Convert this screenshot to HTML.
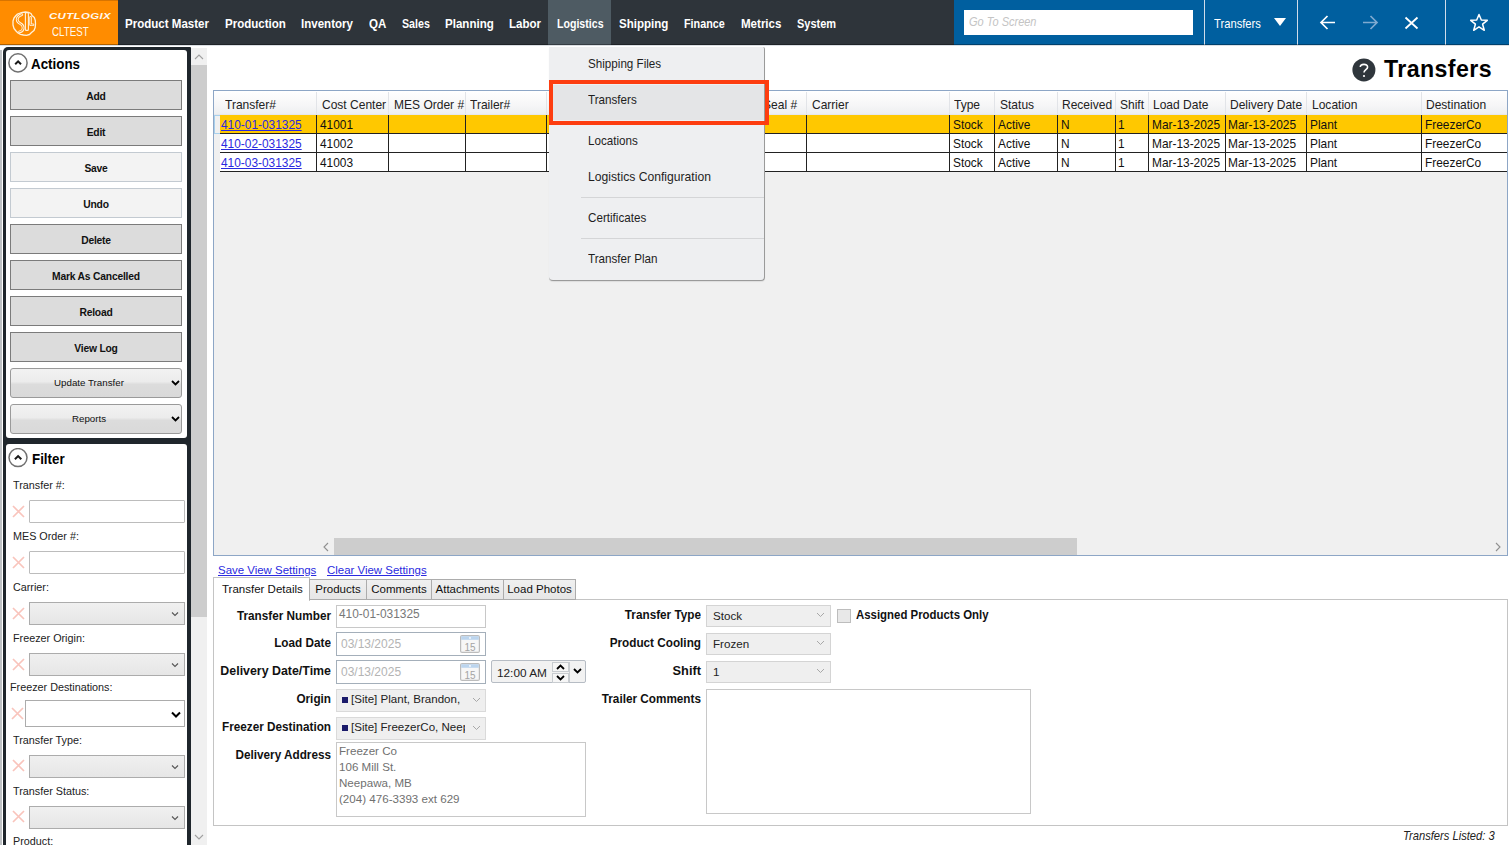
<!DOCTYPE html>
<html><head><meta charset="utf-8">
<style>
*{box-sizing:border-box;margin:0;padding:0}
html,body{width:1509px;height:845px;overflow:hidden;background:#fff;font-family:"Liberation Sans",sans-serif;color:#000}
.a{position:absolute}
.nw{white-space:nowrap}
/* top bar */
#logo{left:0;top:0;width:118px;height:45px;background:#ff8c00;border-top:1px solid #d87400}
#nav{left:118px;top:0;width:837px;height:45px;background:#2e343a}
.nv{top:16.5px;font-size:13.5px;font-weight:bold;color:#fff;line-height:14px;transform:scaleX(.855);transform-origin:0 0}
#blue{left:954px;top:0;width:555px;height:45px;background:#005f9f}
.sep{top:0;width:1px;height:45px;background:#d0dcea}
/* left panel */
.panel{border:3px solid #1f262c;border-radius:5px;background:#fff}
.btn{left:10px;width:172px;height:30px;background:#dcdcdc;border:1px solid #7b7b7b;font-size:10.3px;font-weight:bold;text-align:center;line-height:31px;color:#111;letter-spacing:-0.2px}
.btn.dis{background:#f3f3f3;border-color:#c3cad1}
.dd{left:10px;width:172px;height:30px;border:1px solid #9a9a9a;border-radius:3px;background:linear-gradient(#f2f2f2 0%,#ececec 45%,#dcdcdc 55%,#d9d9d9 100%);font-size:9.75px;text-align:center;line-height:28px;color:#111}
.flab{left:12.5px;font-size:11px;color:#222;line-height:12px;transform:scaleX(.98);transform-origin:0 0}
.fx{left:12px;width:13px;height:13px}
.fin{left:29px;width:156px;height:23px;border:1px solid #bcbcbc;border-radius:1px;background:#fff}
.fcb{left:29px;width:156px;height:23px;border:1px solid #acacac;background:linear-gradient(#f0f0f0,#e6e6e6)}
.gh{top:98px;font-size:12.4px;color:#222;line-height:14px;transform:scaleX(.97);transform-origin:0 0}
.gc{font-size:11.9px;color:#111;line-height:14px}
.lnk{color:#2a2ae0;text-decoration:underline}
.mi{left:588px;font-size:12.6px;color:#1e1e1e;line-height:14px;transform:scaleX(.925);transform-origin:0 0}
.lbl{font-size:12.8px;font-weight:bold;text-align:right;line-height:14px;color:#111;transform:scaleX(.918);transform-origin:100% 0}
.tb{top:579px;height:21px;border:1px solid #acacac;background:linear-gradient(#f0f0f0,#e6e6e6);font-size:11.5px;line-height:19px;text-align:center;color:#111}
.cmb{left:706px;width:125px;height:22px;border:1px solid #d4d4d4;background:#efefef;font-size:11.6px;line-height:20px;padding-left:6px;color:#222}
.inp{left:336px;width:150px;height:23px;border:1px solid #c8c8c8;background:#fff;font-size:11.6px;color:#7a7a7a}
</style></head><body>

<!-- ============ TOP BAR ============ -->
<div id="logo" class="a"></div>
<svg class="a" style="left:8px;top:8px" width="32" height="32" viewBox="8 8 32 32" fill="none" stroke-linecap="round" stroke-linejoin="round">
 <path d="M17.5 14 L20 13.2 L22.5 12.3 L25.5 12 L28.5 12.3 L31 13.5 L32 15.5 L34.3 17.5 L35.3 20.5 L35.5 24 L35.2 27.5 L34 30.5 L31.5 32.5 L29.5 34.5 L26.5 35.3 L23.5 35 L20.5 34.3 L18 33 L16 31 L14 28.5 L13 25 L13 21 L14 18 L16 15.5 Z" stroke="#fff2dc" stroke-width="1.3"/>
 <path d="M21.8 14.6 Q17.2 16 17.2 19.6 Q17.2 22.2 20.2 23.6 Q23.2 25 23.2 28 Q23.2 31.4 19.6 31.8" stroke="#fff2dc" stroke-width="2.8"/>
 <path d="M21.8 14.6 Q17.2 16 17.2 19.6 Q17.2 22.2 20.2 23.6 Q23.2 25 23.2 28 Q23.2 31.4 19.6 31.8" stroke="#ff8c00" stroke-width="0.9"/>
 <rect x="25.4" y="12.6" width="3" height="17.8" rx="1" stroke="#fff2dc" stroke-width="1.1"/>
 <path d="M30.6 17.4 V24.8 H33" stroke="#fff2dc" stroke-width="2.6"/>
 <path d="M30.6 17.4 V24.8 H33" stroke="#ff8c00" stroke-width="0.8"/>
</svg>
<div class="a nw" style="left:49px;top:10.5px;font-size:8.3px;line-height:10px;font-weight:bold;font-style:italic;color:#fff8ee;letter-spacing:0.3px;transform:scaleX(1.37);transform-origin:left top">CUTLOGIX</div>
<div class="a nw" style="left:52px;top:24.5px;font-size:12.5px;color:#fff8ee;transform:scaleX(0.78);transform-origin:left top">CLTEST</div>

<div id="nav" class="a"></div>
<div class="a" style="left:548px;top:0;width:63px;height:45px;background:#4e5b63"></div>
<div class="a nv nw" style="left:125px">Product Master</div>
<div class="a nv nw" style="left:225px">Production</div>
<div class="a nv nw" style="left:301px">Inventory</div>
<div class="a nv nw" style="left:369px">QA</div>
<div class="a nv nw" style="left:402px;transform:scaleX(.79)">Sales</div>
<div class="a nv nw" style="left:445px">Planning</div>
<div class="a nv nw" style="left:509px">Labor</div>
<div class="a nv nw" style="left:557px;transform:scaleX(.785)">Logistics</div>
<div class="a nv nw" style="left:619px">Shipping</div>
<div class="a nv nw" style="left:684px;transform:scaleX(.80)">Finance</div>
<div class="a nv nw" style="left:741px">Metrics</div>
<div class="a nv nw" style="left:797px;transform:scaleX(.813)">System</div>

<div id="blue" class="a"></div>
<div class="a" style="left:964px;top:10px;width:229px;height:25px;background:#fff"></div>
<div class="a nw" style="left:969px;top:15px;font-size:12px;font-style:italic;color:#c4c4c4;line-height:14px;transform:scaleX(.917);transform-origin:0 0">Go To Screen</div>
<div class="a sep" style="left:1204px"></div>
<div class="a sep" style="left:1297px"></div>
<div class="a sep" style="left:1445px"></div>
<div class="a nw" style="left:1214px;top:17px;font-size:12.2px;color:#fff;line-height:14px;transform:scaleX(.92);transform-origin:0 0">Transfers</div>
<svg class="a" style="left:1273px;top:17px" width="14" height="10"><path d="M1 1 H13 L7 9 Z" fill="#fff"/></svg>
<svg class="a" style="left:1319px;top:14px" width="18" height="17" fill="none" stroke="#fff" stroke-width="1.7"><path d="M2 8.5 H16 M8.5 2 L2 8.5 L8.5 15"/></svg>
<svg class="a" style="left:1361px;top:14px" width="18" height="17" fill="none" stroke="#7faad0" stroke-width="1.7"><path d="M16 8.5 H2 M9.5 2 L16 8.5 L9.5 15"/></svg>
<svg class="a" style="left:1404px;top:16px" width="15" height="14" fill="none" stroke="#fff" stroke-width="1.8"><path d="M1.5 1.5 L13.5 12.5 M13.5 1.5 L1.5 12.5"/></svg>
<svg class="a" style="left:1469px;top:13px" width="20" height="19" fill="none" stroke="#fff" stroke-width="1.5"><path d="M10 1.5 L12.3 7 L18.3 7.3 L13.6 11.2 L15.3 17.3 L10 13.8 L4.7 17.3 L6.4 11.2 L1.7 7.3 L7.7 7 Z" stroke-linejoin="round"/></svg>

<div class="a" style="left:0;top:44px;width:1509px;height:1px;background:rgba(0,0,0,.32)"></div>
<div class="a" style="left:0;top:45px;width:1509px;height:1px;background:rgba(90,110,130,.22)"></div>
<!-- ============ LEFT PANEL ============ -->
<div class="a" style="left:0;top:50px;width:2px;height:795px;background:#bfc2c5"></div>
<div class="a" style="left:3px;top:47px;width:188px;height:394px;background:#1f262c;border-radius:5px 1px 0 0"></div><div class="a" style="left:6px;top:50px;width:181px;height:388px;background:#fff;border-radius:3px"></div>
<svg class="a" style="left:8px;top:53px" width="21" height="21" fill="none"><circle cx="10" cy="9.9" r="9.1" stroke="#707070" stroke-width="1.5"/><path d="M7.2 11.3 L10.1 8.4 L13 11.3" stroke="#1a1a1a" stroke-width="2"/></svg>
<div class="a nw" style="left:31px;top:56px;font-size:15px;font-weight:bold;line-height:16px;transform:scaleX(.89);transform-origin:0 0">Actions</div>
<div class="a btn" style="top:80px">Add</div>
<div class="a btn" style="top:116px">Edit</div>
<div class="a btn dis" style="top:152px">Save</div>
<div class="a btn dis" style="top:188px">Undo</div>
<div class="a btn" style="top:224px">Delete</div>
<div class="a btn" style="top:260px">Mark As Cancelled</div>
<div class="a btn" style="top:296px">Reload</div>
<div class="a btn" style="top:332px">View Log</div>
<div class="a dd" style="top:368px;padding-right:14px">Update Transfer<svg class="a" style="left:160px;top:11px" width="9" height="6"><path d="M1 1 L4.5 4.5 L8 1" stroke="#000" stroke-width="1.8" fill="none"/></svg></div>
<div class="a dd" style="top:404px;padding-right:14px">Reports<svg class="a" style="left:160px;top:11px" width="9" height="6"><path d="M1 1 L4.5 4.5 L8 1" stroke="#000" stroke-width="1.8" fill="none"/></svg></div>

<div class="a" style="left:3px;top:441px;width:188px;height:420px;background:#1f262c"></div><div class="a" style="left:6px;top:444px;width:181px;height:420px;background:#fff;border-radius:3px"></div>
<svg class="a" style="left:8px;top:448px" width="21" height="21" fill="none"><circle cx="10" cy="9.6" r="9.0" stroke="#707070" stroke-width="1.5"/><path d="M6.9 11.3 L10.1 8.1 L13.3 11.3" stroke="#1a1a1a" stroke-width="2"/></svg>
<div class="a nw" style="left:32px;top:450.5px;font-size:15px;font-weight:bold;line-height:16px;transform:scaleX(.89);transform-origin:0 0">Filter</div>

<div class="a flab nw" style="top:479px">Transfer #:</div>
<svg class="a fx" style="top:505px" viewBox="0 0 13 13"><path d="M1 1 L12 12 M12 1 L1 12" stroke="#f9c4bc" stroke-width="1.7"/></svg>
<div class="a fin" style="top:500px"></div>

<div class="a flab nw" style="top:530px">MES Order #:</div>
<svg class="a fx" style="top:556px" viewBox="0 0 13 13"><path d="M1 1 L12 12 M12 1 L1 12" stroke="#f9c4bc" stroke-width="1.7"/></svg>
<div class="a fin" style="top:551px"></div>

<div class="a flab nw" style="top:581px">Carrier:</div>
<svg class="a fx" style="top:607px" viewBox="0 0 13 13"><path d="M1 1 L12 12 M12 1 L1 12" stroke="#f9c4bc" stroke-width="1.7"/></svg>
<div class="a fcb" style="top:602px"><svg class="a" style="left:141px;top:8px" width="8" height="6"><path d="M1 1.5 L4 4.5 L7 1.5" stroke="#555" stroke-width="1.1" fill="none"/></svg></div>

<div class="a flab nw" style="top:632px">Freezer Origin:</div>
<svg class="a fx" style="top:658px" viewBox="0 0 13 13"><path d="M1 1 L12 12 M12 1 L1 12" stroke="#f9c4bc" stroke-width="1.7"/></svg>
<div class="a fcb" style="top:653px"><svg class="a" style="left:141px;top:8px" width="8" height="6"><path d="M1 1.5 L4 4.5 L7 1.5" stroke="#555" stroke-width="1.1" fill="none"/></svg></div>

<div class="a flab nw" style="top:681px;left:10px">Freezer Destinations:</div>
<svg class="a fx" style="top:707px;left:11px" viewBox="0 0 13 13"><path d="M1 1 L12 12 M12 1 L1 12" stroke="#f9c4bc" stroke-width="1.7"/></svg>
<div class="a" style="left:25px;top:700px;width:160px;height:27px;border:1px solid #acacac;background:#fff"><svg class="a" style="left:145px;top:10px" width="10" height="7"><path d="M1 1.5 L5 5.5 L9 1.5" stroke="#000" stroke-width="2" fill="none"/></svg></div>

<div class="a flab nw" style="top:734px">Transfer Type:</div>
<svg class="a fx" style="top:759px" viewBox="0 0 13 13"><path d="M1 1 L12 12 M12 1 L1 12" stroke="#f9c4bc" stroke-width="1.7"/></svg>
<div class="a fcb" style="top:755px"><svg class="a" style="left:141px;top:8px" width="8" height="6"><path d="M1 1.5 L4 4.5 L7 1.5" stroke="#555" stroke-width="1.1" fill="none"/></svg></div>

<div class="a flab nw" style="top:785px">Transfer Status:</div>
<svg class="a fx" style="top:810px" viewBox="0 0 13 13"><path d="M1 1 L12 12 M12 1 L1 12" stroke="#f9c4bc" stroke-width="1.7"/></svg>
<div class="a fcb" style="top:806px"><svg class="a" style="left:141px;top:8px" width="8" height="6"><path d="M1 1.5 L4 4.5 L7 1.5" stroke="#555" stroke-width="1.1" fill="none"/></svg></div>

<div class="a flab nw" style="top:835px">Product:</div>

<!-- scrollbar -->
<div class="a" style="left:191px;top:48px;width:16px;height:797px;background:#f0f0f0"></div>
<div class="a" style="left:191px;top:65px;width:16px;height:552px;background:#cdcdcd"></div>
<svg class="a" style="left:193px;top:52px" width="12" height="10"><path d="M2 7 L6 3 L10 7" stroke="#a0a0a0" stroke-width="1.1" fill="none"/></svg>
<svg class="a" style="left:193px;top:832px" width="12" height="10"><path d="M2 3 L6 7 L10 3" stroke="#a0a0a0" stroke-width="1.1" fill="none"/></svg>

<!-- ============ TITLE ============ -->
<svg class="a" style="left:1352px;top:58px" width="24" height="24"><circle cx="11.9" cy="11.9" r="11.5" fill="#2f363c"/><path d="M8.3 9 C8.3 5.6 15.6 5.4 15.6 9 C15.6 11.6 12 11.8 12 14.6" stroke="#fff" stroke-width="1.6" fill="none"/><circle cx="12" cy="18" r="1.1" fill="#fff"/></svg>
<div class="a nw" style="left:1384px;top:55.5px;font-size:23.2px;font-weight:bold;line-height:26px;letter-spacing:0.4px">Transfers</div>

<!-- ============ GRID ============ -->
<div class="a" style="left:213px;top:90px;width:1295px;height:466px;border:1px solid #8da6c6;background:#f0f0f0"></div>
<div class="a" style="left:214px;top:91px;width:1293px;height:24px;background:linear-gradient(#ffffff,#f6f6f7 60%,#eceef0)"></div>
<!--GRID-->
<div class="a" style="left:316px;top:92px;width:1px;height:23px;background:#e2e4e8"></div>
<div class="a" style="left:388px;top:92px;width:1px;height:23px;background:#e2e4e8"></div>
<div class="a" style="left:465px;top:92px;width:1px;height:23px;background:#e2e4e8"></div>
<div class="a" style="left:546px;top:92px;width:1px;height:23px;background:#e2e4e8"></div>
<div class="a" style="left:640px;top:92px;width:1px;height:23px;background:#e2e4e8"></div>
<div class="a" style="left:758px;top:92px;width:1px;height:23px;background:#e2e4e8"></div>
<div class="a" style="left:806px;top:92px;width:1px;height:23px;background:#e2e4e8"></div>
<div class="a" style="left:949px;top:92px;width:1px;height:23px;background:#e2e4e8"></div>
<div class="a" style="left:994px;top:92px;width:1px;height:23px;background:#e2e4e8"></div>
<div class="a" style="left:1057px;top:92px;width:1px;height:23px;background:#e2e4e8"></div>
<div class="a" style="left:1115px;top:92px;width:1px;height:23px;background:#e2e4e8"></div>
<div class="a" style="left:1148px;top:92px;width:1px;height:23px;background:#e2e4e8"></div>
<div class="a" style="left:1225px;top:92px;width:1px;height:23px;background:#e2e4e8"></div>
<div class="a" style="left:1306px;top:92px;width:1px;height:23px;background:#e2e4e8"></div>
<div class="a" style="left:1421px;top:92px;width:1px;height:23px;background:#e2e4e8"></div>
<div class="a nw gh" style="left:225px">Transfer#</div>
<div class="a nw gh" style="left:322px">Cost Center</div>
<div class="a nw gh" style="left:394px">MES Order #</div>
<div class="a nw gh" style="left:470px">Trailer#</div>
<div class="a nw gh" style="left:763px">Seal #</div>
<div class="a nw gh" style="left:812px">Carrier</div>
<div class="a nw gh" style="left:954px">Type</div>
<div class="a nw gh" style="left:1000px">Status</div>
<div class="a nw gh" style="left:1062px">Received</div>
<div class="a nw gh" style="left:1120px">Shift</div>
<div class="a nw gh" style="left:1153px">Load Date</div>
<div class="a nw gh" style="left:1230px">Delivery Date</div>
<div class="a nw gh" style="left:1312px">Location</div>
<div class="a nw gh" style="left:1426px">Destination</div>
<div class="a" style="left:214px;top:114px;width:1293px;height:1px;background:#e6e8ec"></div>
<div class="a" style="left:220px;top:115px;width:1287px;height:18px;background:#ffc800"></div>
<div class="a" style="left:220px;top:133px;width:1287px;height:1px;background:#222"></div>
<div class="a nw gc lnk" style="left:221px;top:118px">410-01-031325</div>
<div class="a nw gc" style="left:320px;top:118px">41001</div>
<div class="a nw gc" style="left:953px;top:118px">Stock</div>
<div class="a nw gc" style="left:998px;top:118px">Active</div>
<div class="a nw gc" style="left:1061px;top:118px">N</div>
<div class="a nw gc" style="left:1118px;top:118px">1</div>
<div class="a nw gc" style="left:1152px;top:118px">Mar-13-2025</div>
<div class="a nw gc" style="left:1228px;top:118px">Mar-13-2025</div>
<div class="a nw gc" style="left:1310px;top:118px">Plant</div>
<div class="a nw gc" style="left:1425px;top:118px">FreezerCo</div>
<div class="a" style="left:220px;top:134px;width:1287px;height:18px;background:#ffffff"></div>
<div class="a" style="left:220px;top:152px;width:1287px;height:1px;background:#222"></div>
<div class="a nw gc lnk" style="left:221px;top:137px">410-02-031325</div>
<div class="a nw gc" style="left:320px;top:137px">41002</div>
<div class="a nw gc" style="left:953px;top:137px">Stock</div>
<div class="a nw gc" style="left:998px;top:137px">Active</div>
<div class="a nw gc" style="left:1061px;top:137px">N</div>
<div class="a nw gc" style="left:1118px;top:137px">1</div>
<div class="a nw gc" style="left:1152px;top:137px">Mar-13-2025</div>
<div class="a nw gc" style="left:1228px;top:137px">Mar-13-2025</div>
<div class="a nw gc" style="left:1310px;top:137px">Plant</div>
<div class="a nw gc" style="left:1425px;top:137px">FreezerCo</div>
<div class="a" style="left:220px;top:153px;width:1287px;height:18px;background:#ffffff"></div>
<div class="a" style="left:220px;top:171px;width:1287px;height:1px;background:#222"></div>
<div class="a nw gc lnk" style="left:221px;top:156px">410-03-031325</div>
<div class="a nw gc" style="left:320px;top:156px">41003</div>
<div class="a nw gc" style="left:953px;top:156px">Stock</div>
<div class="a nw gc" style="left:998px;top:156px">Active</div>
<div class="a nw gc" style="left:1061px;top:156px">N</div>
<div class="a nw gc" style="left:1118px;top:156px">1</div>
<div class="a nw gc" style="left:1152px;top:156px">Mar-13-2025</div>
<div class="a nw gc" style="left:1228px;top:156px">Mar-13-2025</div>
<div class="a nw gc" style="left:1310px;top:156px">Plant</div>
<div class="a nw gc" style="left:1425px;top:156px">FreezerCo</div>
<div class="a" style="left:316px;top:115px;width:1px;height:57px;background:#222"></div>
<div class="a" style="left:388px;top:115px;width:1px;height:57px;background:#222"></div>
<div class="a" style="left:465px;top:115px;width:1px;height:57px;background:#222"></div>
<div class="a" style="left:546px;top:115px;width:1px;height:57px;background:#222"></div>
<div class="a" style="left:640px;top:115px;width:1px;height:57px;background:#222"></div>
<div class="a" style="left:758px;top:115px;width:1px;height:57px;background:#222"></div>
<div class="a" style="left:806px;top:115px;width:1px;height:57px;background:#222"></div>
<div class="a" style="left:949px;top:115px;width:1px;height:57px;background:#222"></div>
<div class="a" style="left:994px;top:115px;width:1px;height:57px;background:#222"></div>
<div class="a" style="left:1057px;top:115px;width:1px;height:57px;background:#222"></div>
<div class="a" style="left:1115px;top:115px;width:1px;height:57px;background:#222"></div>
<div class="a" style="left:1148px;top:115px;width:1px;height:57px;background:#222"></div>
<div class="a" style="left:1225px;top:115px;width:1px;height:57px;background:#222"></div>
<div class="a" style="left:1306px;top:115px;width:1px;height:57px;background:#222"></div>
<div class="a" style="left:1421px;top:115px;width:1px;height:57px;background:#222"></div>
<div class="a" style="left:214px;top:115px;width:6px;height:57px;background:#f0f0f0"></div>
<div class="a" style="left:214px;top:115px;width:6px;height:19px;border:1px solid #a8d0ec;border-right:none"></div>
<!--/GRID-->


<!-- hscroll -->
<div class="a" style="left:214px;top:538px;width:1293px;height:17px;background:#f0f0f0"></div>
<div class="a" style="left:334px;top:538px;width:743px;height:17px;background:#cdcdcd"></div>
<svg class="a" style="left:321px;top:541px" width="10" height="12"><path d="M7 2 L3 6 L7 10" stroke="#909090" stroke-width="1.1" fill="none"/></svg>
<svg class="a" style="left:1493px;top:541px" width="10" height="12"><path d="M3 2 L7 6 L3 10" stroke="#909090" stroke-width="1.1" fill="none"/></svg>

<!-- ============ MENU ============ -->
<div class="a" style="left:549px;top:47px;width:216px;height:234px;background:#eeeff1;border-right:1px solid #9a9a9a;border-bottom:1px solid #9a9a9a;border-radius:0 2px 4px 4px;box-shadow:0 1px 1px rgba(0,0,0,.08)"></div>
<div class="a" style="left:553px;top:85px;width:211px;height:35px;background:#e4e5e7"></div>
<div class="a mi nw" style="top:57px">Shipping Files</div>
<div class="a mi nw" style="top:93px">Transfers</div>
<div class="a mi nw" style="top:134px">Locations</div>
<div class="a mi nw" style="top:170px;transform:scaleX(.965)">Logistics Configuration</div>
<div class="a" style="left:581px;top:197px;width:183px;height:1px;background:#d4d5d7"></div>
<div class="a mi nw" style="top:211px">Certificates</div>
<div class="a" style="left:581px;top:238px;width:183px;height:1px;background:#d4d5d7"></div>
<div class="a mi nw" style="top:252px">Transfer Plan</div>
<div class="a" style="left:549px;top:80px;width:220px;height:45px;border:4.5px solid #fd3d10"></div>

<!-- ============ DETAILS ============ -->
<div class="a nw lnk" style="left:218px;top:563px;font-size:11.45px;line-height:14px">Save View Settings</div>
<div class="a nw lnk" style="left:327px;top:563px;font-size:11.45px;line-height:14px">Clear View Settings</div>

<div class="a" style="left:213px;top:599px;width:1295px;height:227px;border:1px solid #c4c4c4;background:#fff"></div>
<div class="a" style="left:213px;top:577px;width:97px;height:24px;border:1px solid #c4c4c4;border-bottom:none;background:#fff;font-size:11.5px;line-height:22px;padding-left:8px;color:#111">Transfer Details</div>
<div class="a tb" style="left:309px;width:58px">Products</div>
<div class="a tb" style="left:366px;width:66px">Comments</div>
<div class="a tb" style="left:431px;width:73px">Attachments</div>
<div class="a tb" style="left:503px;width:73px">Load Photos</div>


<!-- left form -->
<div class="a lbl nw" style="left:200px;width:131px;top:609px">Transfer Number</div>
<div class="a inp" style="top:605px;height:23px"></div>
<div class="a nw" style="left:339px;top:607px;font-size:11.9px;line-height:14px;color:#787878">410-01-031325</div>

<div class="a lbl nw" style="left:200px;width:131px;top:636px">Load Date</div>
<div class="a" style="left:336px;top:632px;width:150px;height:24px;border:1.5px solid #a4afba;background:#fff"></div>
<div class="a nw" style="left:341px;top:637px;font-size:12px;line-height:14px;color:#b4b4b4">03/13/2025</div>
<svg class="a" style="left:460px;top:635px" width="20" height="18"><rect x="0.6" y="0.6" width="18.8" height="16.8" rx="1.5" fill="#f7f7f7" stroke="#bcbcbc" stroke-width="1.2"/><rect x="1.2" y="1.2" width="17.6" height="3.6" fill="#bcd5ee"/><circle cx="10" cy="2.9" r="0.9" fill="#fff"/><text x="10" y="15.6" font-family="Liberation Sans" font-size="10" fill="#a4a4a4" text-anchor="middle">15</text></svg>

<div class="a lbl nw" style="left:190px;width:141px;top:664px;transform:scaleX(.968)">Delivery Date/Time</div>
<div class="a" style="left:336px;top:660px;width:150px;height:24px;border:1.5px solid #a4afba;background:#fff"></div>
<div class="a nw" style="left:341px;top:665px;font-size:12px;line-height:14px;color:#b4b4b4">03/13/2025</div>
<svg class="a" style="left:460px;top:663px" width="20" height="18"><rect x="0.6" y="0.6" width="18.8" height="16.8" rx="1.5" fill="#f7f7f7" stroke="#bcbcbc" stroke-width="1.2"/><rect x="1.2" y="1.2" width="17.6" height="3.6" fill="#bcd5ee"/><circle cx="10" cy="2.9" r="0.9" fill="#fff"/><text x="10" y="15.6" font-family="Liberation Sans" font-size="10" fill="#a4a4a4" text-anchor="middle">15</text></svg>

<div class="a" style="left:491px;top:660px;width:95px;height:23px;border:1px solid #b6bcc4;border-radius:2px;background:#f2f2f2"></div>
<div class="a nw" style="left:497px;top:665.5px;font-size:11.8px;line-height:14px;color:#222">12:00 AM</div>
<div class="a" style="left:552px;top:662px;width:17px;height:10px;border:1px solid #c8ccd0;background:#f6f6f6"></div>
<div class="a" style="left:552px;top:673px;width:17px;height:10px;border:1px solid #c8ccd0;background:#f6f6f6"></div>
<svg class="a" style="left:556px;top:664px" width="9" height="6"><path d="M1 5 L4.5 1.5 L8 5" stroke="#000" stroke-width="1.8" fill="none"/></svg>
<svg class="a" style="left:556px;top:675px" width="9" height="6"><path d="M1 1 L4.5 4.5 L8 1" stroke="#000" stroke-width="1.8" fill="none"/></svg>
<div class="a" style="left:569px;top:662px;width:1px;height:20px;background:#c8ccd0"></div>
<svg class="a" style="left:573px;top:668px" width="9" height="6"><path d="M1 1 L4.5 4.5 L8 1" stroke="#000" stroke-width="1.8" fill="none"/></svg>

<div class="a lbl nw" style="left:200px;width:131px;top:692px">Origin</div>
<div class="a" style="left:336px;top:689px;width:150px;height:23px;border:1px solid #dadada;background:#efefef"></div>
<div class="a" style="left:342px;top:697px;width:6px;height:6px;background:#1a1a6a"></div>
<div class="a nw" style="left:351px;top:692px;font-size:11.56px;line-height:14px;color:#222">[Site] Plant, Brandon,</div>
<svg class="a" style="left:472px;top:697px" width="9" height="6"><path d="M1 1 L4.5 4.5 L8 1" stroke="#a8a8a8" stroke-width="1" fill="none"/></svg>

<div class="a lbl nw" style="left:200px;width:131px;top:720px">Freezer Destination</div>
<div class="a" style="left:336px;top:717px;width:150px;height:23px;border:1px solid #dadada;background:#efefef"></div>
<div class="a" style="left:342px;top:725px;width:6px;height:6px;background:#1a1a6a"></div>
<div class="a nw" style="left:351px;top:720px;width:114px;overflow:hidden;font-size:11.56px;line-height:14px;color:#222">[Site] FreezerCo, Neepawa</div>
<svg class="a" style="left:472px;top:725px" width="9" height="6"><path d="M1 1 L4.5 4.5 L8 1" stroke="#a8a8a8" stroke-width="1" fill="none"/></svg>

<div class="a lbl nw" style="left:200px;width:131px;top:748px">Delivery Address</div>
<div class="a" style="left:336px;top:742px;width:250px;height:75px;border:1px solid #c8c8c8;background:#fff"></div>
<div class="a nw" style="left:339px;top:743px;font-size:11.6px;line-height:16px;color:#707070">Freezer Co<br>106 Mill St.<br>Neepawa, MB<br>(204) 476-3393 ext 629</div>

<!-- right form -->
<div class="a lbl nw" style="left:560px;width:141px;top:608px">Transfer Type</div>
<div class="a cmb nw" style="top:605px">Stock</div><svg class="a" style="left:816px;top:612px" width="9" height="6"><path d="M1 1 L4.5 4.5 L8 1" stroke="#a8a8a8" stroke-width="1" fill="none"/></svg>
<div class="a" style="left:837px;top:609px;width:14px;height:14px;border:1px solid #bdbdbd;background:#e8e8e8"></div>
<div class="a nw" style="left:856px;top:608px;font-size:12.4px;font-weight:bold;line-height:14px;color:#111;transform:scaleX(.921);transform-origin:0 0">Assigned Products Only</div>

<div class="a lbl nw" style="left:560px;width:141px;top:636px">Product Cooling</div>
<div class="a cmb nw" style="top:633px">Frozen</div><svg class="a" style="left:816px;top:640px" width="9" height="6"><path d="M1 1 L4.5 4.5 L8 1" stroke="#a8a8a8" stroke-width="1" fill="none"/></svg>

<div class="a lbl nw" style="left:560px;width:141px;top:664px;transform:scaleX(1)">Shift</div>
<div class="a cmb nw" style="top:661px">1</div><svg class="a" style="left:816px;top:668px" width="9" height="6"><path d="M1 1 L4.5 4.5 L8 1" stroke="#a8a8a8" stroke-width="1" fill="none"/></svg>

<div class="a lbl nw" style="left:560px;width:141px;top:692px">Trailer Comments</div>
<div class="a" style="left:706px;top:689px;width:325px;height:125px;border:1px solid #c8c8c8;background:#fff"></div>

<div class="a nw" style="left:1403px;top:829px;font-size:11.9px;font-style:italic;line-height:14px;color:#222;transform:scaleX(.94);transform-origin:0 0">Transfers Listed: 3</div>

</body></html>
